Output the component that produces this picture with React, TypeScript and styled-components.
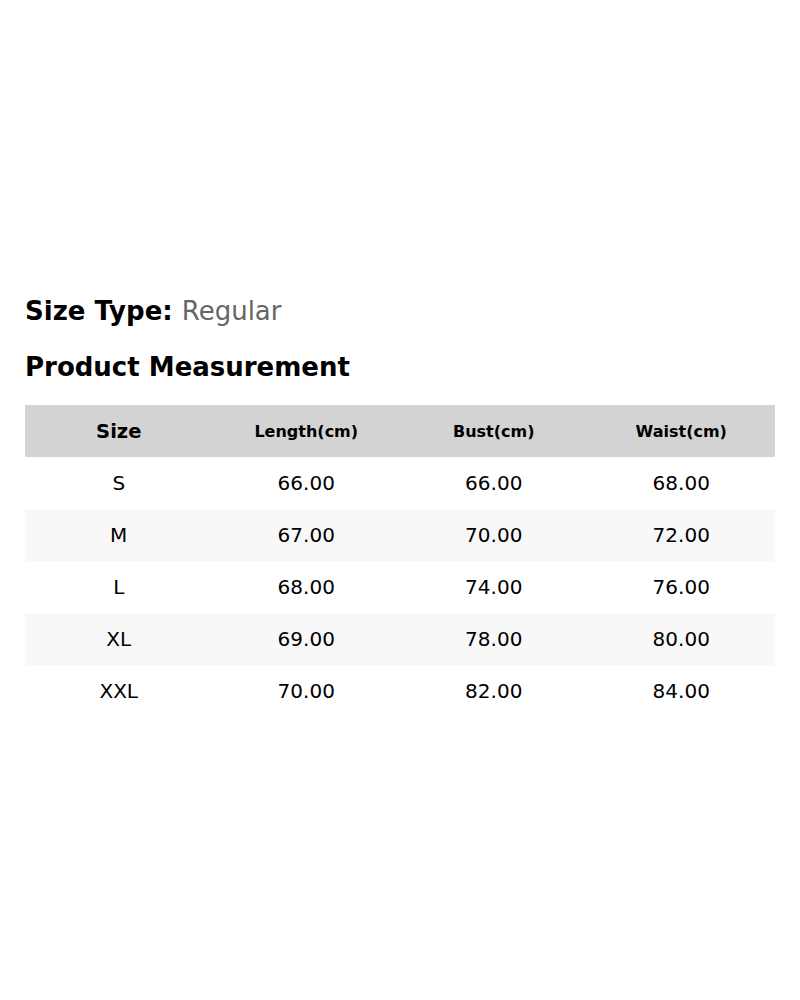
import React from "react";
import styled, { createGlobalStyle } from "styled-components";

const Global = createGlobalStyle`
  html, body { margin: 0; padding: 0; background: #fff; }
  body { font-family: "DejaVu Sans", sans-serif; color: #000; }
`;

const Page = styled.div`
  width: 800px;
  height: 1000px;
  display: flex;
  flex-direction: column;
  padding: 296px 25px 0;
  box-sizing: border-box;
`;

const SizeType = styled.div`
  font-size: 26px;
  line-height: 30px;
  font-weight: 700;
`;

const SizeValue = styled.span`
  font-weight: 400;
  color: #666;
`;

const Title = styled.h2`
  margin: 26px 0 23px;
  font-size: 26px;
  line-height: 30px;
  font-weight: 700;
`;

const Table = styled.div`
  display: grid;
  grid-template-columns: repeat(4, 1fr);
`;

const HeadCell = styled.div<{ $big?: boolean }>`
  background: #d3d3d3;
  height: 52px;
  display: flex;
  align-items: center;
  justify-content: center;
  font-weight: 700;
  font-size: ${(p) => (p.$big ? "19.5px" : "16px")};
`;

const Cell = styled.div<{ $alt?: boolean }>`
  background: ${(p) => (p.$alt ? "#f8f8f8" : "#fff")};
  height: 52px;
  display: flex;
  align-items: center;
  justify-content: center;
  font-size: 20px;
`;

const rows = [
  ["S", "66.00", "66.00", "68.00"],
  ["M", "67.00", "70.00", "72.00"],
  ["L", "68.00", "74.00", "76.00"],
  ["XL", "69.00", "78.00", "80.00"],
  ["XXL", "70.00", "82.00", "84.00"],
];

export default function App() {
  return (
    <>
      <Global />
      <Page>
        <SizeType>
          Size Type: <SizeValue>Regular</SizeValue>
        </SizeType>
        <Title>Product Measurement</Title>
        <Table>
          <HeadCell $big>Size</HeadCell>
          <HeadCell>Length(cm)</HeadCell>
          <HeadCell>Bust(cm)</HeadCell>
          <HeadCell>Waist(cm)</HeadCell>
          {rows.map((r, i) =>
            r.map((c, j) => (
              <Cell key={`${i}-${j}`} $alt={i % 2 === 1}>
                {c}
              </Cell>
            ))
          )}
        </Table>
      </Page>
    </>
  );
}
